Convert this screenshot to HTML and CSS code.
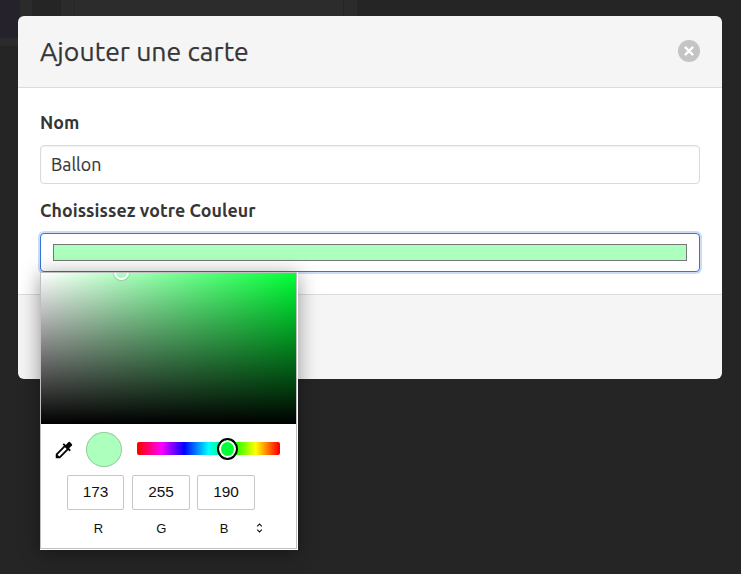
FILE: index.html
```html
<!DOCTYPE html>
<html lang="fr">
<head>
<meta charset="utf-8">
<title>Ajouter une carte</title>
<link rel="stylesheet" href="styles.css">
</head>
<body>
<div class="backdrop" aria-hidden="true"><div class="strip violet"></div><div class="strip gap-a"></div><div class="strip gap-b"></div><div class="strip gap-c"></div><div class="strip column"></div><div class="strip gap-d"></div></div>
<main class="modal">
  <header class="head">
    <h1 class="title">Ajouter une carte</h1>
    <button class="close" aria-label="Fermer"><svg width="22" height="22" viewBox="0 0 22 22"><path d="M6.9 6.9l8.2 8.2M15.1 6.9l-8.2 8.2" stroke="#fff" stroke-width="2.3"/></svg></button>
  </header>
  <section class="body">
    <div class="label"><span class="nom">Nom</span></div>
    <div class="field">Ballon</div>
    <div class="label second"><span class="couleur">Choississez votre Couleur</span></div>
    <div class="field focused">
      <div class="swatch"></div>
      <div class="picker">
        <div class="picker-inner">
          <div class="area"><div class="area-thumb"></div></div>
          <div class="tools">
            <svg class="dropper" width="22" height="22" viewBox="0 0 24 24"><path d="M20.71 5.63l-2.34-2.34a1 1 0 0 0-1.41 0l-3.12 3.12-1.93-1.91-1.41 1.41 1.42 1.42L3 16.25V21h4.75l8.92-8.92 1.42 1.42 1.41-1.41-1.92-1.92 3.12-3.12c.4-.4.4-1.03.01-1.42zM6.92 19L5 17.08l8.06-8.06 1.92 1.92L6.92 19z"/></svg>
            <div class="current"></div>
            <div class="hue"><div class="hue-thumb"></div></div>
          </div>
          <div class="values"><div class="value narrow">173</div><div class="value">255</div><div class="value last">190</div></div>
          <div class="channels"><span class="channel">R</span><span class="channel">G</span><span class="channel">B</span>
            <svg class="switch" width="7" height="10" viewBox="0 0 7 10"><path d="M1.2 3.3L3.5 1l2.3 2.3M1.2 6.7L3.5 9l2.3-2.3" fill="none" stroke="#111" stroke-width="1.1"/></svg>
          </div>
        </div>
      </div>
    </div>
  </section>
  <footer class="foot"></footer>
</main>
</body>
</html>
```
FILE: styles.css
```css
* { box-sizing: border-box; }
body {
  margin: 0;
  height: 574px;
  padding: 16px 19px 0 18px;
  overflow: hidden;
  background: #252525;
  color: #363636;
  font-family: Ubuntu, "Noto Sans", sans-serif;
}
.backdrop {
  position: absolute;
  inset: 0 0 auto 0;
  height: 46px;
  display: flex;
}
.strip { height: 46px; background: #2b2b2b; }
.violet { width: 20px; height: 38px; background: #25222c; box-shadow: 0 8px #2b2b2b; }
.gap-a { width: 12px; }
.gap-b { width: 29px; background: #252525; }
.gap-c { width: 13px; }
.column { width: 270px; background: #2c2c2c; border: solid #262626; border-width: 0 1px; }
.gap-d { width: 13px; }
.modal { position: relative; height: 363px; display: flex; flex-direction: column; }
.head {
  height: 72px;
  padding: 0 22px;
  display: flex;
  align-items: center;
  justify-content: space-between;
  background: #f5f5f5;
  border-bottom: 1px solid #dbdbdb;
  border-radius: 6px 6px 0 0;
}
.title { margin: -2px 0 0; font-size: 26.6px; font-weight: 400; line-height: 26px; letter-spacing: 0.05px; white-space: nowrap; -webkit-text-stroke: 0.25px; }
.close {
  width: 22px;
  height: 22px;
  margin-top: -2px;
  padding: 0;
  border: 0;
  border-radius: 50%;
  background: #c4c4c4;
}
.close svg { display: block; }
.body { height: 206px; padding: 21px 22px 0; background: #fff; }
.label { height: 27px; margin-bottom: 9px; font-size: 17.8px; font-weight: 700; line-height: 26px; letter-spacing: 0.06px; white-space: nowrap; }
.second { margin: 13px 0 9px; }
.field {
  height: 39px;
  padding: 0 10px;
  border: 1px solid #dbdbdb;
  border-radius: 4px;
  font-size: 17.8px;
  line-height: 37px;
  background: #fff;
  box-shadow: inset 0 1px 2px rgba(10, 10, 10, .06);
  -webkit-text-stroke: 0.15px;
}
.focused {
  position: relative;
  padding: 10px 12px;
  border-color: #3273dc;
  box-shadow: 0 0 0 2px rgba(50, 115, 220, .25);
}
.swatch { height: 17px; background: #adffbe; border: 1px solid #777; }
.foot { flex: 1; background: #f5f5f5; border-top: 1px solid #dbdbdb; border-radius: 0 0 6px 6px; }
.picker {
  position: absolute;
  top: 38px;
  left: -1px;
  z-index: 2;
  width: 258px;
  height: 278px;
  padding: 0 1px 1px 0;
  background: #fff;
  color: #101010;
  font-family: "Liberation Sans", sans-serif;
  -webkit-text-stroke: 0;
  box-shadow: 0 3px 19px rgba(0, 0, 0, .4);
}
.picker-inner { height: 277px; border: 1px solid #bfbfbf; }
.area {
  height: 151px;
  overflow: hidden;
  background: linear-gradient(to top, #000, transparent), linear-gradient(to right, #fff, #00ff36);
}
.area-thumb {
  width: 15px;
  height: 15px;
  margin: -8px 0 0 73px;
  border: 2px solid #fff;
  border-radius: 50%;
  box-shadow: 0 0 2px rgba(0, 0, 0, .5);
}
.tools { height: 51px; padding-left: 12px; display: flex; align-items: center; }
.dropper { margin-top: 1px; }
.current {
  width: 36px;
  height: 35px;
  margin-left: 11px;
  border: 1px solid #8fcf9c;
  border-radius: 50%;
  background: #adffbe;
}
.hue {
  width: 143px;
  height: 13px;
  margin: -2px 0 0 15px;
  border-radius: 2px;
  background: linear-gradient(to left, #f00 1%, #ff0 17%, #0f0 33%, #0ff 50%, #00f 67%, #f0f 83%, #f00 99%);
}
.hue-thumb {
  width: 21px;
  height: 22px;
  margin: -4px 0 0 80px;
  border: 2px solid #000;
  border-radius: 50%;
  background: #00ff36;
  box-shadow: inset 0 0 0 2px #fff;
}
.values { display: flex; padding-left: 26px; }
.value {
  width: 58px;
  height: 35px;
  margin-right: 7px;
  border: 1px solid #c6c6c6;
  border-radius: 2px;
  font-size: 15.4px;
  line-height: 32px;
  text-align: center;
}
.narrow { width: 57px; margin-right: 8px; }
.channels { height: 36px; padding-left: 26px; display: flex; align-items: center; font-size: 13px; }
.channel { width: 62.8px; text-align: center; }
.switch { margin-left: 0.6px; }
```
